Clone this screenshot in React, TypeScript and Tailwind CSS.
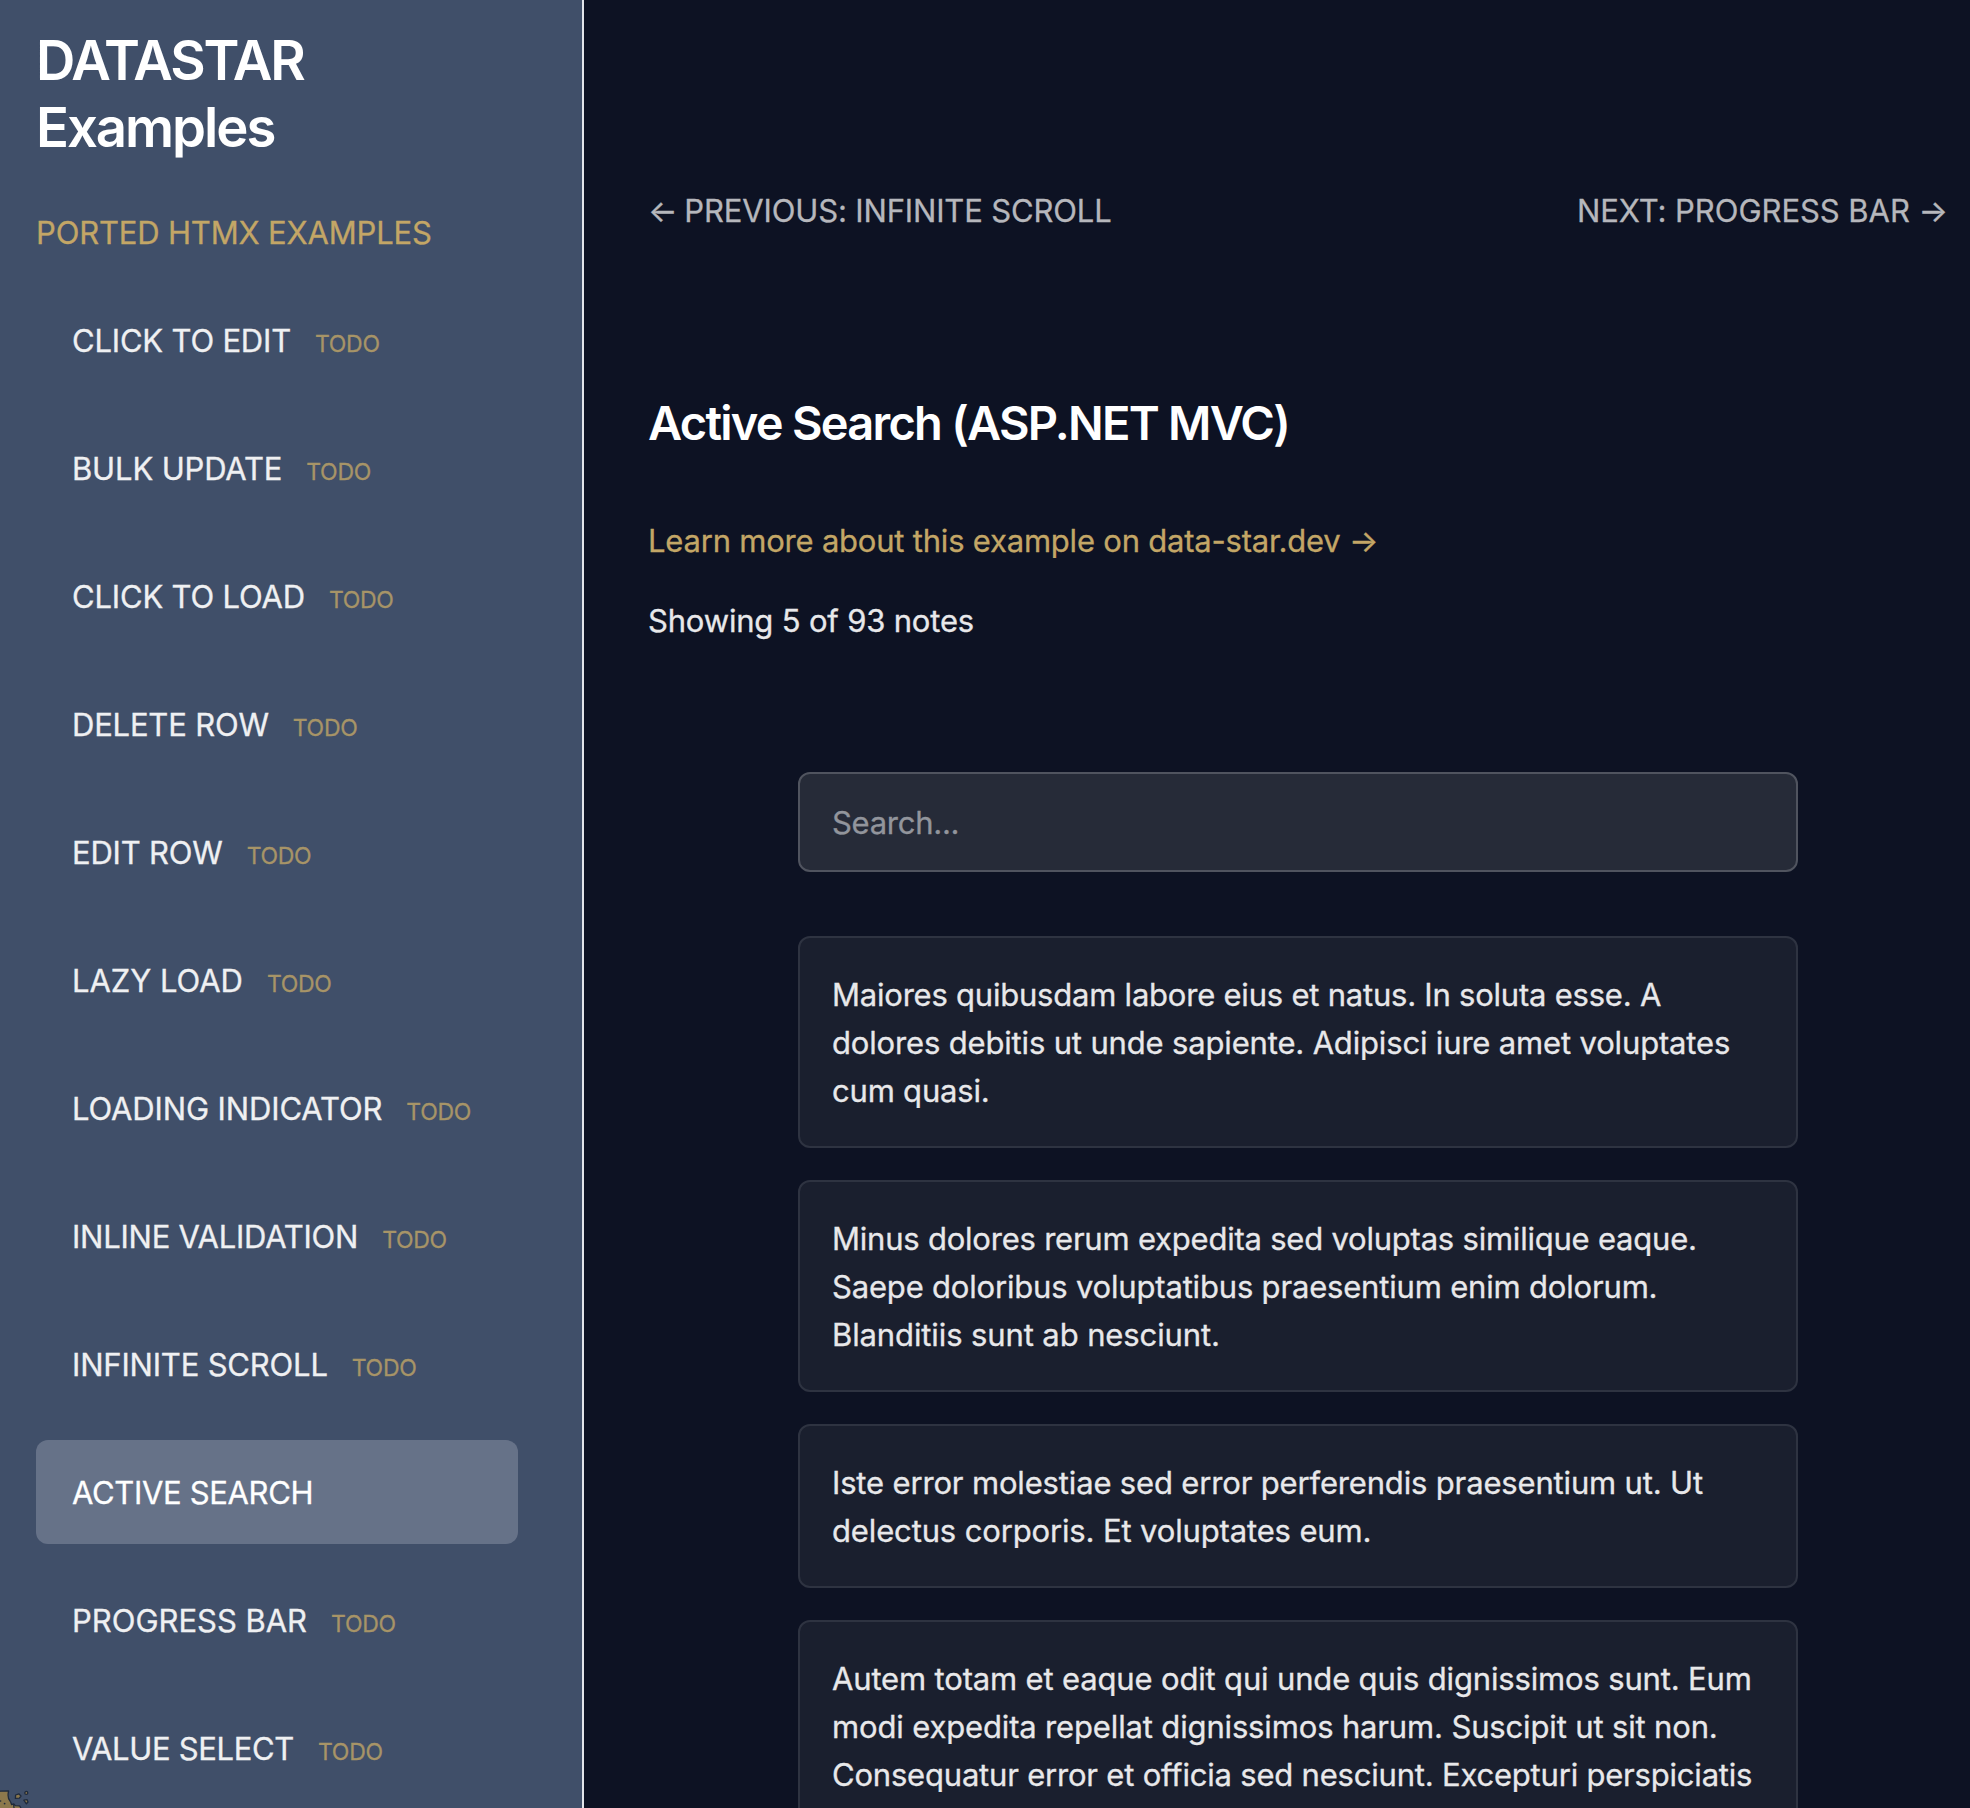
const navItems = [
  { label: "CLICK TO EDIT", tracking: "tracking-[-0.2px]" },
  { label: "BULK UPDATE", tracking: "tracking-[-0.16px]" },
  { label: "CLICK TO LOAD", tracking: "tracking-[-0.18px]" },
  { label: "DELETE ROW", tracking: "tracking-[-0.2px]" },
  { label: "EDIT ROW", tracking: "tracking-[-0.2px]" },
  { label: "LAZY LOAD", tracking: "tracking-[-0.04px]" },
  { label: "LOADING INDICATOR", tracking: "tracking-[-0.13px]" },
  { label: "INLINE VALIDATION", tracking: "tracking-[-0.24px]" },
  { label: "INFINITE SCROLL", tracking: "tracking-[-0.19px]" },
  { label: "ACTIVE SEARCH", tracking: "tracking-[-0.34px]", active: true },
  { label: "PROGRESS BAR", tracking: "tracking-[-0.02px]" },
  { label: "VALUE SELECT", tracking: "tracking-[-0.33px]" },
];

const notes = [
  [
    ["tracking-[-0.22px]", "Maiores quibusdam labore eius et natus. In soluta esse. A"],
    ["tracking-[-0.16px]", "dolores debitis ut unde sapiente. Adipisci iure amet voluptates"],
    ["tracking-[-0.2px]", "cum quasi."],
  ],
  [
    ["tracking-[-0.22px]", "Minus dolores rerum expedita sed voluptas similique eaque."],
    ["tracking-[-0.18px]", "Saepe doloribus voluptatibus praesentium enim dolorum."],
    ["tracking-[-0.11px]", "Blanditiis sunt ab nesciunt."],
  ],
  [
    ["tracking-[-0.16px]", "Iste error molestiae sed error perferendis praesentium ut. Ut"],
    ["tracking-[-0.14px]", "delectus corporis. Et voluptates eum."],
  ],
  [
    ["tracking-[-0.16px]", "Autem totam et eaque odit qui unde quis dignissimos sunt. Eum"],
    ["tracking-[-0.15px]", "modi expedita repellat dignissimos harum. Suscipit ut sit non."],
    ["tracking-[-0.2px]", "Consequatur error et officia sed nesciunt. Excepturi perspiciatis"],
  ],
];

function Cookie() {
  return (
    <svg
      className="absolute bottom-0 left-0 h-5 w-8"
      viewBox="0 0 32 20"
      fill="#8c784c"
      stroke="#1f2a3c"
      strokeWidth="1.3"
      strokeLinejoin="round"
    >
      <path d="M-2 4.2 L0 3.2 L8.6 3 C7.6 7.2 8.2 11.2 10.2 13.4 C11 14.2 11 15.4 11.6 16.6 L13.6 15.8 L15.2 17.6 L19.6 17.8 L21.4 21 L-2 21 Z" />
      <path d="M15.6 7 L18.8 5.8 L21 8 L19.4 10.2 L15.4 10.4 Z" />
      <circle cx="26.3" cy="4.9" r="1.5" />
      <path d="M23.8 12.2 L27 11.6 L28 14 L26.4 15.8 Z" />
      <path d="M13.6 16 L14 20" fill="none" />
      <circle cx="0.6" cy="13" r="0.8" fill="#1f2a3c" stroke="none" />
      <circle cx="4.6" cy="15.6" r="0.9" fill="#1f2a3c" stroke="none" />
    </svg>
  );
}

function Sidebar() {
  return (
    <aside className="relative h-full w-[584px] shrink-0 overflow-hidden border-r-2 border-[#e2e5ea] bg-[#404f69] px-9 pt-[27px]">
      <h1 className="text-[54.5px] leading-[67px] font-semibold tracking-[-2.05px] text-white [-webkit-text-stroke:0px]">
        DATASTAR
        <br />
        Examples
      </h1>
      <h2 className="mt-[47px] pt-px text-[31px] leading-[47px] tracking-[-0.17px] text-[#c3a666]">
        PORTED HTMX EXAMPLES
      </h2>
      <nav className="mt-8 mr-7 flex flex-col gap-6">
        {navItems.map((item) => (
          <a
            key={item.label}
            className={
              item.active
                ? "flex h-[104px] items-baseline rounded-xl bg-[#667288] px-9 pt-[29px] text-[31px] leading-[48px] text-white"
                : "flex h-[104px] items-baseline rounded-xl px-9 pt-[29px] text-[31px] leading-[48px] text-[#eff0f2]"
            }
          >
            <span className={item.tracking}>{item.label}</span>
            {!item.active && (
              <span className="ml-6 text-[23px] tracking-[-0.3px] text-[#a79467]">TODO</span>
            )}
          </a>
        ))}
      </nav>
      <Cookie />
    </aside>
  );
}

export default function App() {
  return (
    <div className="flex h-[1808px] w-[1970px] overflow-hidden bg-[#0d1223] font-['Inter',sans-serif] text-[31px] leading-[48px] whitespace-nowrap text-[#e8e8ea] [-webkit-text-stroke:0.3px]">
      <Sidebar />
      <main className="min-w-0 flex-1 pt-[187px] pr-[22px] pl-16">
        <div className="flex justify-between text-[#b6b7bc]">
          <a className="tracking-[-0.15px]">
            <span className="tracking-[-1.8px]">←</span> PREVIOUS: INFINITE SCROLL
          </a>
          <a className="tracking-[-0.05px]">
            NEXT: PROGRESS BAR →
          </a>
        </div>
        <h2 className="mt-[159px] text-[47px] leading-[58px] font-semibold tracking-[-1.74px] text-white [-webkit-text-stroke:0px]">
          Active Search (ASP.NET MVC)
        </h2>
        <p className="mt-[65px] tracking-[-0.21px] text-[#c3a666]">
          Learn more about this example on data-star.dev →
        </p>
        <p className="mt-8 tracking-[-0.18px]">Showing 5 of 93 notes</p>
        <div className="mx-auto mt-[127px] w-[1000px]">
          <div className="flex h-[100px] items-center rounded-xl border-2 border-[#50545f] bg-[#262b38] px-8 pt-0.5">
            <span className="tracking-[-0.27px] text-[#92959c]">Search...</span>
          </div>
          <div className="mt-16 flex flex-col gap-8">
            {notes.map((lines) => (
              <article
                key={lines[0][1]}
                className="rounded-xl border-2 border-[#2e3341] bg-[#1a1f2e] px-8 pt-[33px] pb-[31px]"
              >
                {lines.map(([tracking, text]) => (
                  <div key={text} className={tracking}>
                    {text}
                  </div>
                ))}
              </article>
            ))}
          </div>
        </div>
      </main>
    </div>
  );
}
